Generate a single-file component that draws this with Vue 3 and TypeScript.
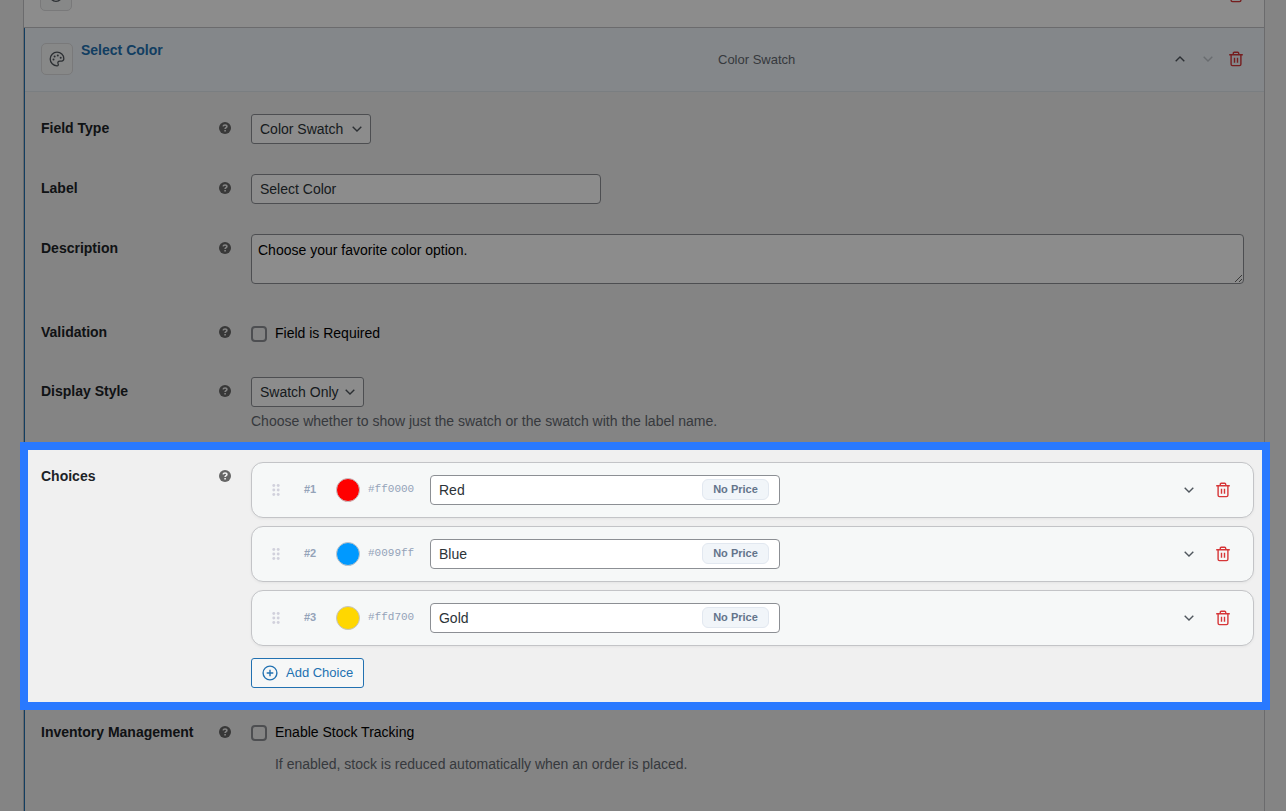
<script setup lang="ts">
import { ref } from 'vue'

interface Choice {
  id: number
  hex: string
  name: string
}

const fieldLabel = ref('Select Color')
const description = ref('Choose your favorite color option.')
const required = ref(false)
const stockTracking = ref(false)
const choices = ref<Choice[]>([
  { id: 1, hex: '#ff0000', name: 'Red' },
  { id: 2, hex: '#0099ff', name: 'Blue' },
  { id: 3, hex: '#ffd700', name: 'Gold' },
])
</script>

<template>
  <div class="page">
    <svg class="defs" width="0" height="0">
      <symbol id="trash" viewBox="0 0 16 16">
        <path d="M1.2 3.7h13.6M5.3 3.4V2.3Q5.3 1.2 6.3 1.2h3.4q1 0 1 1.1v1.1M3.1 3.9v9.3q0 1.4 1.4 1.4h7q1.4 0 1.4-1.4V3.9M6.5 6.8v5M9.5 6.8v5" fill="none" stroke="currentColor" stroke-width="1.4" />
      </symbol>
      <symbol id="down" viewBox="0 0 12 12">
        <path d="M1.7 3.8 6 8l4.300-4.200" fill="none" stroke="currentColor" stroke-width="1.4" />
      </symbol>
      <symbol id="palette" viewBox="0 0 16 16">
        <path d="M8 1.200a6.800 6.800 0 1 0 0 13.600c1.200 0 1.600-1 1.100-2-.7-1.500.1-2.700 1.700-2.700h1.800c1.400 0 2.200-.9 2.200-2.500C14.800 4 11.800 1.200 8 1.200Z" fill="none" stroke="currentColor" stroke-width="1.3" />
        <g fill="currentColor"><circle cx="4.500" cy="8.600" r="1" /><circle cx="5.600" cy="5.400" r="1" /><circle cx="8.800" cy="4.500" r="1" /><circle cx="11.700" cy="6.800" r="1" /></g>
      </symbol>
      <symbol id="help" viewBox="0 0 12 12">
        <circle cx="6" cy="6" r="6" fill="currentColor" />
        <path d="M4.100 4.300c.2-.9.9-1.300 1.900-1.300 1.200 0 1.900.6 1.900 1.500 0 1.200-1.800 1.200-1.800 2.600M6.100 8v1.500" fill="none" stroke="#f0f0f0" stroke-width="1.600" />
      </symbol>
    </svg>

    <main class="panel">
      <div class="previous">
        <span class="type-icon"><svg width="16" height="16" viewBox="0 0 16 16"><circle cx="8" cy="8" r="6.300" fill="none" stroke="currentColor" stroke-width="1.300" /></svg></span>
        <svg class="trash" width="16" height="16"><use href="#trash" /></svg>
      </div>

      <section class="field">
        <header class="head">
          <span class="type-icon"><svg width="16" height="16"><use href="#palette" /></svg></span>
          <strong class="title">Select Color</strong>
          <span class="type-name">Color Swatch</span>
          <span class="actions">
            <svg class="up" width="12" height="12"><use href="#down" /></svg>
            <svg class="faded" width="12" height="12"><use href="#down" /></svg>
            <svg class="trash" width="16" height="16"><use href="#trash" /></svg>
          </span>
        </header>

        <div class="form">
          <div class="row normal">
            <span class="label">Field Type</span>
            <svg class="help"><use href="#help" /></svg>
            <div class="control"><button class="select wide">Color Swatch<svg width="12" height="12"><use href="#down" /></svg></button></div>
          </div>
          <div class="row normal">
            <span class="label">Label</span>
            <svg class="help"><use href="#help" /></svg>
            <div class="control"><input v-model="fieldLabel" class="text" type="text" /></div>
          </div>
          <div class="row tall">
            <span class="label">Description</span>
            <svg class="help"><use href="#help" /></svg>
            <div class="control"><textarea v-model="description" spellcheck="false" /></div>
          </div>
          <div class="row short">
            <span class="label">Validation</span>
            <svg class="help low"><use href="#help" /></svg>
            <div class="control"><label class="check"><input v-model="required" type="checkbox" />Field is Required</label></div>
          </div>
          <div class="row display">
            <span class="label">Display Style</span>
            <svg class="help"><use href="#help" /></svg>
            <div class="control">
              <button class="select">Swatch Only<svg width="12" height="12"><use href="#down" /></svg></button>
              <p class="hint">Choose whether to show just the swatch or the swatch with the label name.</p>
            </div>
          </div>
          <div class="row choices">
            <span class="label">Choices</span>
            <svg class="help"><use href="#help" /></svg>
            <div class="control list">
              <div v-for="choice in choices" :key="choice.id" class="card">
                <svg class="grip" width="8" height="12" viewBox="0 0 8 12">
                  <g v-for="y in [1.5, 6, 10.5]" :key="y" fill="#d1d1dc"><circle cx="1.8" :cy="y" r="1.45" /><circle cx="6.2" :cy="y" r="1.45" /></g>
                </svg>
                <span class="number">#{{ choice.id }}</span>
                <span class="swatch" :style="{ backgroundColor: choice.hex }" />
                <code class="hex">{{ choice.hex }}</code>
                <div class="name">
                  <input v-model="choice.name" type="text" />
                  <span class="price">No Price</span>
                </div>
                <svg class="expand" width="12" height="12"><use href="#down" /></svg>
                <svg class="trash" width="16" height="16"><use href="#trash" /></svg>
              </div>
              <button class="add">
                <svg width="16" height="16" viewBox="0 0 16 16" fill="none" stroke="currentColor" stroke-width="1.4"><circle cx="8" cy="8" r="6.9" /><path d="M8 4.700v6.600M4.700 8h6.600" /></svg>
                Add Choice
              </button>
            </div>
          </div>
          <div class="row">
            <span class="label">Inventory Management</span>
            <svg class="help"><use href="#help" /></svg>
            <div class="control">
              <label class="check stock"><input v-model="stockTracking" type="checkbox" />Enable Stock Tracking</label>
              <p class="hint indented">If enabled, stock is reduced automatically when an order is placed.</p>
            </div>
          </div>
        </div>
      </section>
    </main>
    <div class="spotlight" />
  </div>
</template>

<style>
body { margin: 0; overflow: hidden; }
</style>

<style scoped>
.page, .page * { box-sizing: border-box; }
.page {
  position: relative;
  width: 1286px;
  height: 811px;
  overflow: hidden;
  background: #f0f0f0;
  padding-left: 23px;
  font: 14px/20px "Liberation Sans", Arial, sans-serif;
  color: #1d2327;
}
.defs { position: absolute; }
svg { display: block; flex: none; }
.panel { width: 1242px; height: 811px; border: 1px solid #c3c4c7; border-width: 0 1px; }
.previous {
  height: 28px;
  display: flex;
  align-items: flex-end;
  padding: 0 20px 16px 16px;
  background: #fff;
  border-bottom: 1px solid #c3c4c7;
}
.previous .trash { margin: 0 0 8px auto; }
.type-icon {
  width: 32px;
  height: 32px;
  flex: none;
  display: flex;
  align-items: center;
  justify-content: center;
  border: 1px solid #dcdcde;
  border-radius: 5px;
  background: #f6f7f7;
  color: #50575e;
}
.field { height: 783px; border-left: 1px solid #2271b1; }
.head {
  height: 64px;
  display: flex;
  align-items: center;
  padding: 0 20px 1px 16px;
  background: #f0f6fc;
  border-bottom: 1px solid #dfe5ec;
}
.title { width: 637px; margin-left: 8px; padding-bottom: 18px; color: #2271b1; }
.type-name { padding-top: 2px; font-size: 13px; color: #646970; }
.actions { margin-left: auto; display: flex; align-items: center; gap: 16px; color: #50575e; }
.actions .trash { margin-left: -2px; }
.up { transform: rotate(180deg); }
.faded { opacity: .3; }
.trash { color: #d63638; }
.form { padding: 22px 10px 0 16px; }
.row { display: grid; grid-template-columns: 177.7px 12.3px 1003px; }
.normal { height: 60px; }
.tall { height: 84px; }
.short { height: 59px; }
.display { height: 85px; }
.choices { height: 256px; }
.label { padding-top: 4px; font-weight: 700; white-space: nowrap; }
.help { width: 12px; height: 12px; margin-top: 7.5px; color: #666; }
.low { margin-top: 8.3px; }
.control { margin-left: 20px; }
.select, .text, .name input, textarea {
  font: inherit;
  color: #2c3338;
  background: #fff;
  border: 1px solid #8c8f94;
  border-radius: 4px;
  outline: none;
}
.select {
  width: 113px;
  height: 30px;
  display: flex;
  align-items: center;
  justify-content: space-between;
  padding: 0 7px 0 8px;
  border-radius: 3px;
}
.select svg { color: #50575e; }
.wide { width: 120px; }
.text, .name input { display: block; width: 350px; height: 30px; padding: 0 8px; }
textarea { display: block; width: 993px; height: 50px; padding: 5px 6px; color: #000; overflow: hidden; }
.check { display: flex; align-items: center; gap: 8px; height: 30px; color: #000; }
.stock { height: 28px; }
.check input {
  appearance: none;
  width: 16px;
  height: 16px;
  margin: 1px 0 0;
  border: 2px solid #8c8f94;
  border-radius: 4px;
}
.hint { margin: 4px 0 0; color: #646970; }
.indented { margin: 8px 0 0 24px; }
.list { display: flex; flex-direction: column; gap: 8px; width: 1003px; }
.card {
  height: 56px;
  display: flex;
  align-items: center;
  padding: 0 22px;
  background: #f6f8f8;
  border: 1px solid #c3c4c7;
  border-radius: 12px;
  box-shadow: 0 1px 3px #0000000d;
}
.grip { margin-left: -2px; }
.number { width: 32px; margin-left: 24px; font-size: 11px; font-weight: 700; color: #94a3b8; padding-bottom: 2px; }
.swatch { width: 24px; height: 24px; border: 1px solid #c3c4c7; border-radius: 50%; }
.hex { width: 62px; margin-left: 8px; padding-bottom: 2px; font: 11px/16px "Liberation Mono", monospace; color: #94a3b8; }
.name { position: relative; }
.price {
  position: absolute;
  top: 4px;
  right: 11px;
  width: 67px;
  height: 21px;
  border: 1px solid #e2e8f0;
  border-radius: 6px;
  background: #f1f5f9;
  color: #64748b;
  font-size: 11px;
  line-height: 18px;
  font-weight: 700;
  text-align: center;
}
.expand { margin-left: auto; margin-right: 20px; color: #50575e; }
.add {
  width: 113px;
  height: 30px;
  margin-top: 4px;
  display: flex;
  align-items: center;
  gap: 8px;
  padding: 0 10px;
  border: 1px solid #2271b1;
  border-radius: 3px;
  background: #f6f7f7;
  color: #2271b1;
  font: 13px/20px "Liberation Sans", Arial, sans-serif;
  white-space: nowrap;
}
.spotlight {
  position: absolute;
  left: 20px;
  top: 442px;
  width: 1250px;
  height: 268px;
  border: 8px solid #2979ff;
  box-shadow: 0 0 0 2000px rgba(0, 0, 0, .45);
  pointer-events: none;
}
</style>
